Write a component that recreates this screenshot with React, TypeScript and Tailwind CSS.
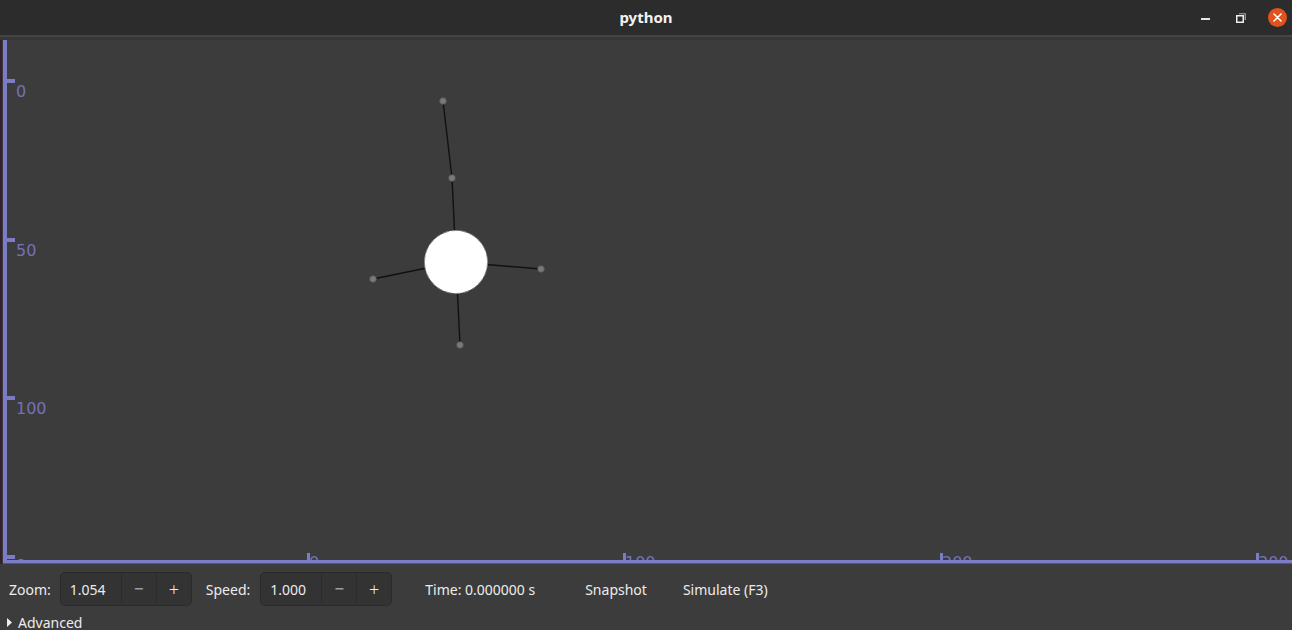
import React from 'react'

const AXIS = '#7b7bc6'
const LABEL = '#7272b8'

// node positions taken from the graph view
const center = { x: 456, y: 262 }
const nodes = [
    { x: 443, y: 101 },
    { x: 452, y: 178 },
    { x: 373, y: 279 },
    { x: 541, y: 269 },
    { x: 460, y: 345 },
]
const links: [number, number, number, number][] = [
    [443, 101, 452, 178],
    [452, 178, 456, 262],
    [373, 279, 456, 262],
    [541, 269, 456, 262],
    [460, 345, 456, 262],
]

const yTicks = [
    { y: 79, label: '0' },
    { y: 238, label: '50' },
    { y: 396, label: '100' },
    { y: 555, label: '150' },
]
const xTicks = [
    { x: 307, label: '0' },
    { x: 623, label: '100' },
    { x: 940, label: '200' },
    { x: 1256, label: '300' },
]

function Spin({ value }: { value: string }) {
    return (
        <div className="flex h-[34px] rounded-[5px] border border-[#2a2a2a] bg-[#333333] text-[#ececec]">
            <div className="flex w-[60px] items-center pl-[9px]">{value}</div>
            <div className="flex w-[35px] items-center justify-center border-l border-[#2c2c2c] text-[17px] font-light">−</div>
            <div className="flex w-[35px] items-center justify-center border-l border-[#2c2c2c] text-[18px] font-light">+</div>
        </div>
    )
}

export default function App() {
    return (
        <div
            className="flex h-[630px] w-[1292px] flex-col overflow-hidden bg-[#3c3c3c] text-[14px] text-[#ececec]"
            style={{ fontFamily: '"Noto Sans", "DejaVu Sans", sans-serif' }}
        >
            {/* title bar */}
            <div className="relative flex h-[35px] shrink-0 items-center justify-center bg-[#2c2c2c]">
                <span className="text-[15px] font-bold text-[#f2f2f2]">python</span>
                <div className="absolute right-0 top-0 flex h-[35px] items-center">
                    <div className="mr-[26px] mt-[2px] h-[2px] w-[9px] bg-[#e6e6e6]" />
                    <svg width="10" height="10" viewBox="0 0 10 10" className="mr-[22px]">
                        <rect x="0.75" y="2.75" width="6.5" height="6.5" fill="none" stroke="#eee" strokeWidth="1.5" />
                        <path d="M3 0.75 H9.25 V7" fill="none" stroke="#aaa" strokeWidth="1.2" />
                    </svg>
                    <div className="mr-[5px] flex h-[19px] w-[19px] items-center justify-center rounded-full bg-[#e2521d]">
                        <svg width="9" height="9" viewBox="0 0 9 9">
                            <path d="M1 1 L8 8 M8 1 L1 8" stroke="#fff" strokeWidth="1.6" strokeLinecap="round" />
                        </svg>
                    </div>
                </div>
            </div>
            <div className="h-[2px] shrink-0 bg-[#454545]" />
            <div className="h-[3px] shrink-0 bg-[#363636]" />

            {/* graph view */}
            <div className="flex h-[524px] shrink-0 border-l-2 border-[#33202a]">
                <svg width="1290" height="524" viewBox="2 40 1290 524" className="block">
                    {links.map(([x1, y1, x2, y2], i) => (
                        <line key={i} x1={x1} y1={y1} x2={x2} y2={y2} stroke="#111" strokeWidth="1.4" />
                    ))}
                    {nodes.map((n, i) => (
                        <circle key={i} cx={n.x} cy={n.y} r="3.3" fill="#7a7a7a" stroke="#555" strokeWidth="0.8" />
                    ))}
                    <circle cx={center.x} cy={center.y} r="31.5" fill="#fff" stroke="#8a8a8a" strokeWidth="1" strokeDasharray="6 3" />

                    {yTicks.map((t) => (
                        <g key={t.label}>
                            <rect x="7" y={t.y} width="8" height="4" fill={AXIS} />
                            <text x="16" y={t.y + 18} fill={LABEL} fontSize="16" fontFamily="DejaVu Sans, sans-serif">
                                {t.label}
                            </text>
                        </g>
                    ))}
                    {xTicks.map((t) => (
                        <g key={t.label}>
                            <text x={t.x + 2} y="568" fill={LABEL} fontSize="16" fontFamily="DejaVu Sans, sans-serif">
                                {t.label}
                            </text>
                            <rect x={t.x} y="553" width="3" height="8" fill={AXIS} />
                        </g>
                    ))}
                    <text x="16" y="568" fill={LABEL} fontSize="16" fontFamily="DejaVu Sans, sans-serif">
                        o−.
                    </text>
                    <rect x="3" y="40" width="4" height="523" fill={AXIS} />
                    <rect x="3" y="560" width="1289" height="3" fill={AXIS} />
                    <rect x="3" y="563" width="1289" height="1" fill="#55557a" />
                </svg>
            </div>

            {/* controls */}
            <div className="flex shrink-0 flex-col pl-[9px]">
                <div className="mt-[8px] flex h-[34px] items-center">
                    <span>Zoom:</span>
                    <div className="ml-[9px]">
                        <Spin value="1.054" />
                    </div>
                    <span className="ml-[14px]">Speed:</span>
                    <div className="ml-[10px]">
                        <Spin value="1.000" />
                    </div>
                    <span className="ml-[33px]">Time: 0.000000 s</span>
                    <span className="ml-[50px]">Snapshot</span>
                    <span className="ml-[36px]">Simulate (F3)</span>
                </div>
                <div className="mt-[6px] flex items-center -ml-[2px]">
                    <svg width="5" height="9" viewBox="0 0 5 9" className="mr-[6px]">
                        <path d="M0 0 L5 4.5 L0 9 Z" fill="#eee" />
                    </svg>
                    <span>Advanced</span>
                </div>
            </div>
        </div>
    )
}
